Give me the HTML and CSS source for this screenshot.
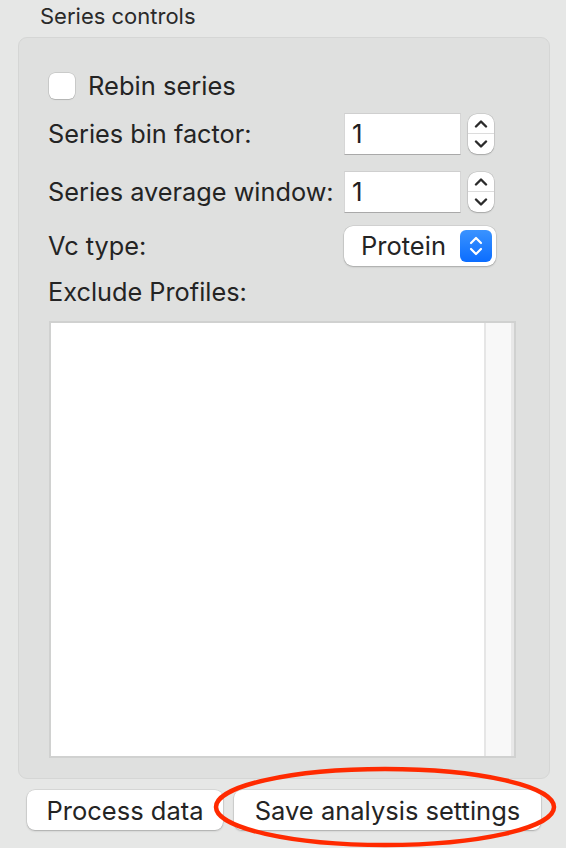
FILE: index.html
```html
<!DOCTYPE html>
<html>
<head>
<meta charset="utf-8">
<link rel="stylesheet" href="styles.css">
</head>
<body>
<div class="window">
  <div class="title">Series controls</div>
  <div class="group">
    <label class="check-row">
      <span class="checkbox"></span>
      <span class="check-label">Rebin series</span>
    </label>
    <div class="row row-bin">
      <span class="label">Series bin factor:</span>
      <div class="control">
        <div class="field">1</div>
        <div class="stepper">
          <span class="step up"><svg width="14" height="9" viewBox="0 0 14 9"><path d="M2 7.5 L7 2.5 L12 7.5" fill="none" stroke="#2b2b2b" stroke-width="2.4" stroke-linecap="round" stroke-linejoin="round"/></svg></span>
          <span class="step down"><svg width="14" height="9" viewBox="0 0 14 9"><path d="M2 1.5 L7 6.5 L12 1.5" fill="none" stroke="#2b2b2b" stroke-width="2.4" stroke-linecap="round" stroke-linejoin="round"/></svg></span>
        </div>
      </div>
    </div>
    <div class="row row-avg">
      <span class="label">Series average window:</span>
      <div class="control">
        <div class="field">1</div>
        <div class="stepper">
          <span class="step up"><svg width="14" height="9" viewBox="0 0 14 9"><path d="M2 7.5 L7 2.5 L12 7.5" fill="none" stroke="#2b2b2b" stroke-width="2.4" stroke-linecap="round" stroke-linejoin="round"/></svg></span>
          <span class="step down"><svg width="14" height="9" viewBox="0 0 14 9"><path d="M2 1.5 L7 6.5 L12 1.5" fill="none" stroke="#2b2b2b" stroke-width="2.4" stroke-linecap="round" stroke-linejoin="round"/></svg></span>
        </div>
      </div>
    </div>
    <div class="row row-vc">
      <span class="label">Vc type:</span>
      <div class="popup">
        <span class="popup-text">Protein</span>
        <span class="popup-arrows"><svg width="16" height="24" viewBox="0 0 16 24"><path d="M3 9 L8 4 L13 9" fill="none" stroke="#fff" stroke-width="2.2" stroke-linecap="round" stroke-linejoin="round"/><path d="M3 15 L8 20 L13 15" fill="none" stroke="#fff" stroke-width="2.2" stroke-linecap="round" stroke-linejoin="round"/></svg></span>
      </div>
    </div>
    <div class="exclude-label">Exclude Profiles:</div>
    <div class="list">
      <div class="list-body"></div>
      <div class="list-scroll"></div>
    </div>
  </div>
  <div class="buttons">
    <button class="btn btn-process">Process data</button>
    <button class="btn btn-save">Save analysis settings</button>
  </div>
  <svg class="highlight" width="566" height="848" viewBox="0 0 566 848"><ellipse cx="385" cy="807" rx="169" ry="38" fill="none" stroke="#ff2a00" stroke-width="4.5"/></svg>
</div>
</body>
</html>
```

FILE: styles.css
```css
* { box-sizing: border-box; }
html, body {
  margin: 0;
  padding: 0;
  background: #e6e7e6;
}
body {
  font-family: "Inter", "Liberation Sans", sans-serif;
  color: #242424;
  width: 566px;
  height: 848px;
  overflow: hidden;
}
.window {
  position: relative;
  width: 566px;
  height: 848px;
}
.title {
  font-size: 22px;
  line-height: 24px;
  padding: 4px 0 0 40px;
  height: 37px;
  color: #2a2a2a;
}
.group {
  margin: 0 16px 0 18px;
  height: 742px;
  background: #dfe0df;
  border: 1px solid #d5d6d5;
  border-radius: 9px;
  padding: 34px 34px 20px 29px;
  display: flex;
  flex-direction: column;
}
.check-row {
  display: flex;
  align-items: center;
  height: 27px;
  margin-left: 1px;
}
.checkbox {
  width: 26px;
  height: 26px;
  background: #fff;
  border-radius: 6px;
  box-shadow: 0 0 0 0.5px rgba(0,0,0,0.18), 0 1px 1px rgba(0,0,0,0.12);
}
.check-label {
  font-size: 25.5px;
  margin-left: 13px;
}
.row {
  display: flex;
  align-items: center;
  justify-content: space-between;
  padding-right: 20px;
}
.label {
  font-size: 25.3px;
}
.row-bin { margin-top: 13px; height: 44px; }
.row-avg { margin-top: 14px; height: 44px; }
.row-vc { margin-top: 11px; height: 42px; }
.control {
  display: flex;
  align-items: center;
  width: 151px;
}
.field {
  width: 117px;
  height: 42px;
  background: #fff;
  border-top: 1px solid #cfcfcf;
  border-left: 1px solid #d6d6d6;
  border-right: 1px solid #d6d6d6;
  border-bottom: 1.5px solid #a9a9a9;
  font-size: 26px;
  line-height: 40px;
  padding-left: 7px;
  color: #1e1e1e;
}
.stepper {
  margin-left: 7px;
  width: 26px;
  height: 40px;
  background: #fff;
  border-radius: 9px;
  box-shadow: 0 0 0 0.5px rgba(0,0,0,0.15), 0 1px 1.5px rgba(0,0,0,0.2);
  display: flex;
  flex-direction: column;
}
.step {
  flex: 1;
  display: flex;
  align-items: center;
  justify-content: center;
}
.step.up { border-bottom: 1.5px solid #dcdcdc; }
.popup {
  width: 152px;
  height: 40px;
  background: #fff;
  border-radius: 9px;
  box-shadow: 0 0 0 0.5px rgba(0,0,0,0.12), 0 1px 2px rgba(0,0,0,0.2);
  display: flex;
  align-items: center;
  justify-content: space-between;
  padding: 0 4px 0 17px;
  margin-right: -1px;
}
.popup-text {
  font-size: 25.5px;
}
.popup-arrows {
  width: 32px;
  height: 32px;
  border-radius: 6px;
  background: linear-gradient(#3a93ff, #0b6dff);
  display: flex;
  align-items: center;
  justify-content: center;
}
.exclude-label {
  font-size: 25.3px;
  margin-top: 10px;
  height: 30px;
  line-height: 30px;
}
.list {
  margin-top: 14px;
  margin-left: 1px;
  margin-right: -1px;
  height: 439px;
  border: 2px solid #d0d1d0;
  display: flex;
  background: #fff;
}
.list-body {
  flex: 1;
  background: #fff;
}
.list-scroll {
  width: 30px;
  background: #f8f8f8;
  border-left: 2px solid #e6e6e6;
  border-right: 3px solid #e8e8e8;
}
.buttons {
  display: flex;
  gap: 11px;
  margin: 11px 0 0 27px;
}
.btn {
  height: 40px;
  background: #fff;
  border: none;
  border-radius: 8px;
  box-shadow: 0 0 0 0.5px rgba(0,0,0,0.12), 0 1px 2px rgba(0,0,0,0.22);
  font-family: "Inter", "Liberation Sans", sans-serif;
  font-size: 25.5px;
  color: #242424;
  padding: 0;
}
.btn-process { width: 196px; }
.btn-save { width: 307px; }
.highlight {
  position: absolute;
  left: 0;
  top: 0;
  pointer-events: none;
}
```
